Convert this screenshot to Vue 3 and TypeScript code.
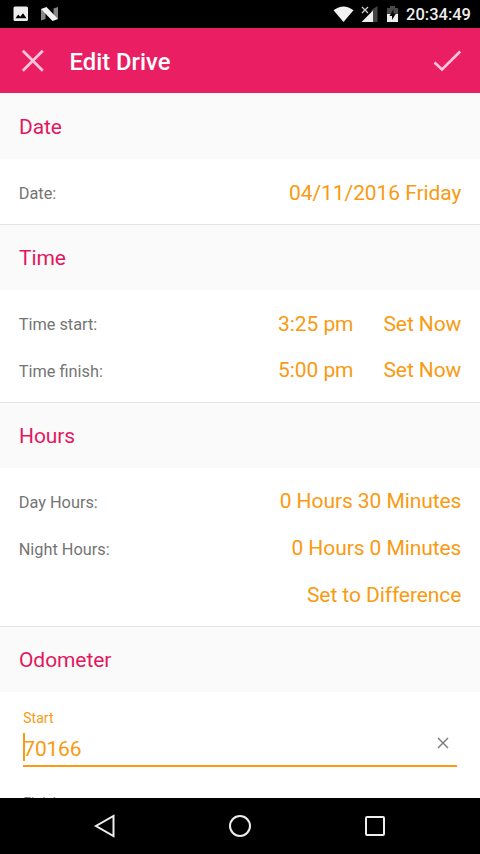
<script setup lang="ts">
import { ref } from 'vue'

interface Row {
  label: string
  values: string[]
}
interface Section {
  title: string
  rows: Row[]
}

const sections: Section[] = [
  { title: 'Date', rows: [{ label: 'Date:', values: ['04/11/2016 Friday'] }] },
  {
    title: 'Time',
    rows: [
      { label: 'Time start:', values: ['3:25 pm', 'Set Now'] },
      { label: 'Time finish:', values: ['5:00 pm', 'Set Now'] },
    ],
  },
  {
    title: 'Hours',
    rows: [
      { label: 'Day Hours:', values: ['0 Hours 30 Minutes'] },
      { label: 'Night Hours:', values: ['0 Hours 0 Minutes'] },
      { label: '', values: ['Set to Difference'] },
    ],
  },
]
const odometerStart = ref('70166')
</script>

<template>
  <div class="screen">
    <div class="status">
      <svg class="notifications" width="46" height="16" viewBox="0 0 46 16">
        <path fill="#eee" fill-rule="evenodd" d="M2 .5h11.500a1.500 1.500 0 0 1 1.500 1.500v11.500a1.500 1.500 0 0 1-1.500 1.500H2A1.500 1.500 0 0 1 .500 13.500V2A1.500 1.500 0 0 1 2 .5zM2.500 12.300h11L10 7.300l-2.800 3.500L5.200 8.600z" />
        <path fill="#858585" d="M28 3l4.500 1.500V13L28 14.500zM40.500 2.500L45 1v12l-4.500-1z" />
        <path fill="#f2f2f2" d="M28 3l5.500-2L45 13l-5.500 2z" />
      </svg>
      <div class="indicators">
        <svg width="66" height="18" viewBox="0 0 66 18">
          <path fill="#f2f2f2" d="M.5 5.300Q10.500-2.500 20.500 5.300L10.500 17z" />
          <path fill="#444" d="M38.500 5L44.500 1v16h-6z" />
          <path fill="#eee" d="M28.500 17L40 5.500V17z" />
          <path stroke="#ccc" stroke-width="1.300" d="M29 2l6 6m0-6l-6 6" />
          <path fill="#4a4a4a" d="M54 3h3V1h5v2h3v7H54z" />
          <path fill="#eee" d="M54 9h11v8H54z" />
          <path fill="#080808" d="M60.500 4L56.500 11h2.500v4l4-6.500h-2.500z" />
        </svg>
        <span class="clock">20:34:49</span>
      </div>
    </div>

    <header class="toolbar">
      <svg width="24" height="24" viewBox="0 0 24 24">
        <path class="tool-stroke" d="M1.800 1.700l20 20m0-20l-20 20" />
      </svg>
      <h1>Edit Drive</h1>
      <svg class="confirm" width="29" height="22" viewBox="0 0 29 22">
        <path class="tool-stroke" d="M1.500 12.500l7.500 7L27.200 1.500" />
      </svg>
    </header>

    <main class="content">
      <section v-for="section in sections" :key="section.title">
        <h2>{{ section.title }}</h2>
        <div class="rows">
          <div v-for="row in section.rows" :key="row.label" class="row">
            <span class="label">{{ row.label }}</span>
            <span v-for="value in row.values" :key="value" class="value">{{ value }}</span>
          </div>
        </div>
      </section>
      <section>
        <h2>Odometer</h2>
        <div class="fields">
          <div class="caption">Start</div>
          <div class="field">
            <i class="caret"></i>
            <span class="number">{{ odometerStart }}</span>
            <svg class="clear" width="12" height="12" viewBox="0 0 12 12">
              <path d="M1 1l10 10M11 1L1 11" />
            </svg>
          </div>
          <div class="next-caption">Finish</div>
        </div>
      </section>
    </main>

    <nav class="navbar">
      <svg width="22" height="24" viewBox="0 0 22 24"><path d="M19.500 2v20L2 12z" /></svg>
      <svg width="24" height="24" viewBox="0 0 24 24"><circle cx="12" cy="12" r="10" /></svg>
      <svg width="22" height="22" viewBox="0 0 22 22"><rect x="2" y="2" width="18" height="18" rx="1" /></svg>
    </nav>
  </div>
</template>

<style>
body {
  background: #fff;
}
</style>

<style scoped>
.screen {
  width: 480px;
  height: 854px;
  display: flex;
  flex-direction: column;
  overflow: hidden;
  font-family: Roboto, sans-serif;
  background: #fff;
}
.status {
  height: 28px;
  flex: none;
  box-sizing: border-box;
  display: flex;
  justify-content: space-between;
  padding: 0 9px 0 13px;
  background: #000;
}
.notifications {
  margin-top: 6px;
}
.indicators {
  display: flex;
  gap: 7px;
}
.indicators svg {
  margin-top: 5px;
}
.clock {
  color: #eee;
  font-size: 16.5px;
  font-weight: 500;
  line-height: 30px;
}
.toolbar {
  height: 65.2px;
  flex: none;
  box-sizing: border-box;
  display: flex;
  align-items: center;
  padding: 0 18px 0 21px;
  background: #e91e63;
}
h1 {
  margin: 2.500px 0 0 24.500px;
  color: #fff;
  font-size: 23.800px;
  font-weight: 500;
}
.confirm {
  margin-left: auto;
}
.tool-stroke {
  fill: none;
  stroke: #ffc6da;
  stroke-width: 2.700;
}
.content {
  flex: 1;
  min-height: 0;
  overflow: hidden;
}
h2 {
  height: 65.75px;
  box-sizing: border-box;
  margin: 0;
  padding: 1px 19px 0;
  border-top: 1px solid #e4e4e4;
  background: #fafafa;
  color: #e2185f;
  font-size: 21px;
  font-weight: 400;
  letter-spacing: -0.08px;
  line-height: 64px;
}
section:first-child h2 {
  border-top-color: #fafafa;
}
.rows {
  padding: 9.330px 18.700px 9.330px 18.700px;
}
.row {
  height: 46.670px;
  display: flex;
  align-items: center;
  gap: 30px;
}
.label {
  flex: 1;
  padding-top: 4px;
  color: #757575;
  font-size: 16.330px;
}
.value {
  padding-top: 2px;
  color: #f99a12;
  font-size: 21px;
  letter-spacing: -0.08px;
}
.fields {
  padding: 17px 23.300px 0;
}
.caption {
  color: #f99a12;
  font-size: 14px;
  line-height: 18px;
}
.field {
  height: 40px;
  box-sizing: border-box;
  display: flex;
  align-items: center;
  border-bottom: 2px solid #f99a12;
}
.caret {
  width: 2px;
  height: 28px;
  margin: 2px -2px 0 0;
  background: #f99a12;
}
.number {
  padding-top: 5px;
  color: #f99a12;
  font-size: 21px;
  letter-spacing: -0.2px;
}
.clear {
  margin: -7px 8px 0 auto;
  fill: none;
  stroke: #777;
  stroke-width: 1.400;
}
.next-caption {
  margin-top: 27px;
  color: #858585;
  font-size: 14px;
  line-height: 18px;
}
.navbar {
  height: 56px;
  flex: none;
  display: flex;
  align-items: center;
  justify-content: space-between;
  box-sizing: border-box;
  padding: 0 94px;
  background: #000;
}
.navbar svg {
  fill: none;
  stroke: #eee;
  stroke-width: 2;
}
</style>
